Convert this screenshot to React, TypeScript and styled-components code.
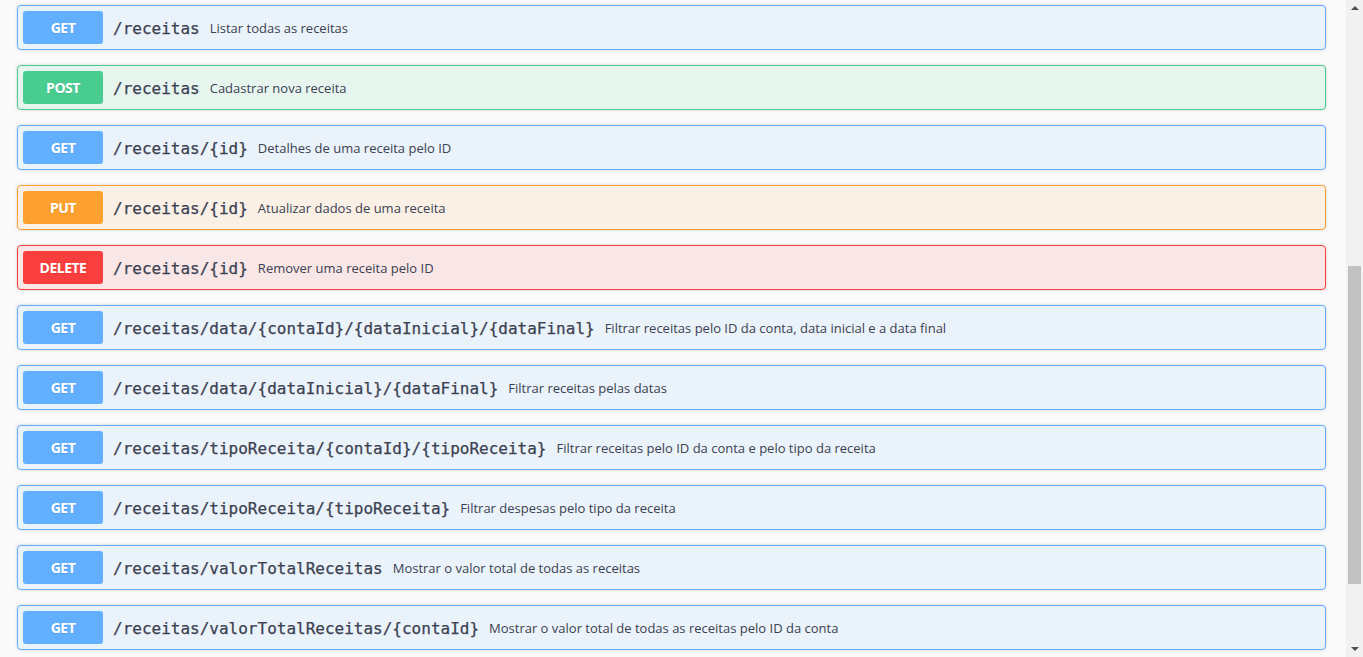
import React from "react";
import styled, { createGlobalStyle } from "styled-components";

type Method = "GET" | "POST" | "PUT" | "DELETE";

const palette: Record<Method, { main: string; bg: string }> = {
  GET: { main: "#61affe", bg: "rgba(97,175,254,.1)" },
  POST: { main: "#49cc90", bg: "rgba(73,204,144,.1)" },
  PUT: { main: "#fca130", bg: "rgba(252,161,48,.1)" },
  DELETE: { main: "#f93e3e", bg: "rgba(249,62,62,.1)" },
};

const endpoints: { method: Method; path: string; description: string }[] = [
  { method: "GET", path: "/receitas", description: "Listar todas as receitas" },
  { method: "POST", path: "/receitas", description: "Cadastrar nova receita" },
  { method: "GET", path: "/receitas/{id}", description: "Detalhes de uma receita pelo ID" },
  { method: "PUT", path: "/receitas/{id}", description: "Atualizar dados de uma receita" },
  { method: "DELETE", path: "/receitas/{id}", description: "Remover uma receita pelo ID" },
  {
    method: "GET",
    path: "/receitas/data/{contaId}/{dataInicial}/{dataFinal}",
    description: "Filtrar receitas pelo ID da conta, data inicial e a data final",
  },
  { method: "GET", path: "/receitas/data/{dataInicial}/{dataFinal}", description: "Filtrar receitas pelas datas" },
  {
    method: "GET",
    path: "/receitas/tipoReceita/{contaId}/{tipoReceita}",
    description: "Filtrar receitas pelo ID da conta e pelo tipo da receita",
  },
  { method: "GET", path: "/receitas/tipoReceita/{tipoReceita}", description: "Filtrar despesas pelo tipo da receita" },
  { method: "GET", path: "/receitas/valorTotalReceitas", description: "Mostrar o valor total de todas as receitas" },
  {
    method: "GET",
    path: "/receitas/valorTotalReceitas/{contaId}",
    description: "Mostrar o valor total de todas as receitas pelo ID da conta",
  },
];

// scroll state of the page: thumb placement in the rail (px)
const SCROLL = { thumbOffset: 249, thumbSize: 318 };

const GlobalStyle = createGlobalStyle`
  html, body {
    margin: 0;
    padding: 0;
    height: 100%;
    overflow: hidden;
    background: #fafafa;
  }
  #root { height: 100%; }
  * { box-sizing: border-box; }
`;

const Page = styled.div`
  height: 100vh;
  display: flex;
  background: #fafafa;
  overflow: hidden;
`;

const Main = styled.main`
  flex: 1;
  min-width: 0;
  padding: 5px 20px 0 17px;
  font-family: "Open Sans", sans-serif;
  color: #3b4151;
  overflow: hidden;
`;

const List = styled.section`
  display: flex;
  flex-direction: column;
  gap: 15px;
`;

const Row = styled.div<{ $method: Method }>`
  display: flex;
  align-items: center;
  height: 45px;
  padding: 5px;
  border: 1px solid ${(p) => palette[p.$method].main};
  background: ${(p) => palette[p.$method].bg};
  border-radius: 4px;
  box-shadow: 0 0 3px rgba(0, 0, 0, 0.19);
`;

const MethodBadge = styled.span<{ $method: Method }>`
  flex: none;
  width: 80px;
  height: 33px;
  display: flex;
  align-items: center;
  justify-content: center;
  border-radius: 3px;
  background: ${(p) => palette[p.$method].main};
  color: #fff;
  font-family: "Open Sans", sans-serif;
  font-weight: 700;
  font-size: 14px;
  letter-spacing: -0.5px;
  text-shadow: 0 1px 0 rgba(0, 0, 0, 0.1);
`;

const Path = styled.span`
  padding: 1px 10px 0;
  font-family: "DejaVu Sans Mono", monospace;
  font-size: 16px;
  font-weight: 400;
  -webkit-text-stroke: 0.25px #3b4151;
  color: #3b4151;
  white-space: nowrap;
`;

const Description = styled.span`
  font-family: "Open Sans", sans-serif;
  font-size: 13px;
  color: #3b4151;
  white-space: nowrap;
`;

const Rail = styled.div`
  flex: none;
  width: 17px;
  height: 100%;
  display: flex;
  flex-direction: column;
  background: #f1f1f1;
`;

const ArrowButton = styled.div`
  flex: 0 0 17px;
  height: 17px;
  display: flex;
  align-items: center;
  justify-content: center;
  padding-left: 1px;
`;

const Triangle = styled.span<{ $dir: "up" | "down" }>`
  display: block;
  flex: none;
  width: 0;
  height: 0;
  box-sizing: content-box;
  border-left: 4px solid transparent;
  border-right: 4px solid transparent;
  ${(p) =>
    p.$dir === "up"
      ? "border-bottom: 4px solid #505050; margin-top: -1px;"
      : "border-top: 4px solid #505050; margin-top: 1px;"}
`;

const Track = styled.div`
  flex: 1 1 auto;
  min-height: 0;
  padding: 0 2px;
`;

const Thumb = styled.div`
  background: #c1c1c1;
`;

export default function App() {
  return (
    <>
      <GlobalStyle />
      <Page>
        <Main>
          <List>
            {endpoints.map((e, i) => (
              <Row key={i} $method={e.method}>
                <MethodBadge $method={e.method}>{e.method}</MethodBadge>
                <Path>{e.path}</Path>
                <Description>{e.description}</Description>
              </Row>
            ))}
          </List>
        </Main>
        <Rail>
          <ArrowButton>
            <Triangle $dir="up" />
          </ArrowButton>
          <Track>
            <Thumb style={{ marginTop: SCROLL.thumbOffset, height: SCROLL.thumbSize }} />
          </Track>
          <ArrowButton>
            <Triangle $dir="down" />
          </ArrowButton>
        </Rail>
      </Page>
    </>
  );
}
